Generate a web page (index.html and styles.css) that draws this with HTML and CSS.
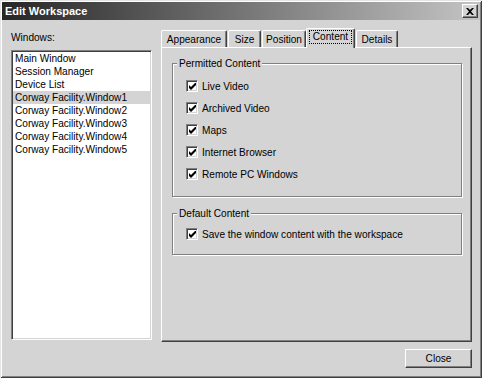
FILE: index.html
```html
<!DOCTYPE html>
<html lang="en">
  <head>
    <meta charset="utf-8"/>
    <title>Edit Workspace</title>
    <link rel="stylesheet" href="styles.css">
  </head>
  <body>
    <div class="dialog">
      <div class="dialog__title">
        <span>Edit Workspace</span>
        <button type="button" class="dialog__close">
          <svg width="8" height="7" viewBox="0 0 8 7"><path d="M0 0h2l2 2 2-2h2L5 3.5 8 7H6L4 5 2 7H0l3-3.5z" fill="#000"/></svg>
        </button>
      </div>

      <div class="dialog__body">
        <div class="windows">
          <div class="windows__label">Windows:</div>
          <ul class="windows__list">
            <li>Main Window</li>
            <li>Session Manager</li>
            <li>Device List</li>
            <li class="is-selected">Corway Facility.Window1</li>
            <li>Corway Facility.Window2</li>
            <li>Corway Facility.Window3</li>
            <li>Corway Facility.Window4</li>
            <li>Corway Facility.Window5</li>
          </ul>
        </div>

        <div class="tabs">
          <div class="tabs__strip">
            <span class="tabs__tab tabs__tab--appearance">Appearance</span>
            <span class="tabs__tab tabs__tab--size">Size</span>
            <span class="tabs__tab tabs__tab--position">Position</span>
            <span class="tabs__tab tabs__tab--content is-active"><span class="tabs__focus">Content</span></span>
            <span class="tabs__tab tabs__tab--details">Details</span>
          </div>
          <div class="tabs__panel">
            <fieldset class="group group--permitted">
              <legend>Permitted Content</legend>
              <label class="check"><span class="check__box"><svg width="7" height="7" viewBox="0 0 7 7"><path d="M0 2v3l2 2 5-5V-1L2 4z" fill="#000"/></svg></span>Live Video</label>
              <label class="check"><span class="check__box"><svg width="7" height="7" viewBox="0 0 7 7"><path d="M0 2v3l2 2 5-5V-1L2 4z" fill="#000"/></svg></span>Archived Video</label>
              <label class="check"><span class="check__box"><svg width="7" height="7" viewBox="0 0 7 7"><path d="M0 2v3l2 2 5-5V-1L2 4z" fill="#000"/></svg></span>Maps</label>
              <label class="check"><span class="check__box"><svg width="7" height="7" viewBox="0 0 7 7"><path d="M0 2v3l2 2 5-5V-1L2 4z" fill="#000"/></svg></span>Internet Browser</label>
              <label class="check"><span class="check__box"><svg width="7" height="7" viewBox="0 0 7 7"><path d="M0 2v3l2 2 5-5V-1L2 4z" fill="#000"/></svg></span>Remote PC Windows</label>
            </fieldset>

            <fieldset class="group group--default">
              <legend>Default Content</legend>
              <label class="check"><span class="check__box"><svg width="7" height="7" viewBox="0 0 7 7"><path d="M0 2v3l2 2 5-5V-1L2 4z" fill="#000"/></svg></span>Save the window content with the workspace</label>
            </fieldset>
          </div>
        </div>
      </div>

      <div class="dialog__footer">
        <button type="button" class="button">Close</button>
      </div>
    </div>
  </body>
</html>
```

FILE: styles.css
```css
body {
  margin: 0;
  background: #d4d4d4;
  font-family: 'Liberation Sans', Arial, sans-serif;
  font-size: 10.1px;
  color: #000;
}

.dialog {
  box-sizing: border-box;
  width: 482px;
  height: 378px;
  background: #d4d4d4;
  box-shadow: inset 1px 1px 0 #e4e4e4, inset -1px -1px 0 #404040,
              inset 2px 2px 0 #fff, inset -2px -2px 0 #808080;
}

.dialog__title {
  display: flex;
  align-items: center;
  justify-content: space-between;
  height: 18px;
  margin: 0 2px;
  padding: 0 2px 0 3px;
  position: relative;
  top: 2px;

  background: linear-gradient(to right, #262626, #c4c4c4);
  color: #fff;
  font-weight: bold;
  font-size: 11px;
}

.dialog__close {
  display: flex;
  align-items: center;
  justify-content: center;
  width: 16px;
  height: 14px;
  padding: 0;
  background: #d4d4d4;
  border: 1px solid;
  border-color: #fff #404040 #404040 #fff;
  box-shadow: inset -1px -1px 0 #808080;
}

.dialog__body {
  display: flex;
  gap: 9px;
  padding: 8px 10px 0 11px;
  margin-top: 2px;
}

.windows {
  width: 141px;
}

.windows__label {
  margin-top: 3px;
  line-height: 13px;
}

.windows__list {
  box-sizing: border-box;
  height: 290px;
  margin: 6px 0 0;
  padding: 1px 0 0;
  list-style: none;

  background: #fff;
  border: 1px solid;
  border-color: #808080 #fff #fff #808080;
  box-shadow: inset 1px 1px 0 #404040, inset -1px -1px 0 #d4d4d4;
}

.windows__list li {
  margin: 0 1px;
  padding-left: 2px;
  line-height: 13px;
  white-space: nowrap;
}

.windows__list li.is-selected {
  background: #d4d4d4;
}

.tabs {
  width: 311px;
}

.tabs__strip {
  display: flex;
  align-items: flex-end;
  height: 19px;
}

.tabs__tab {
  box-sizing: border-box;
  height: 17px;
  margin-right: 1px;
  padding-top: 2px;
  line-height: 13px;
  text-align: center;

  border-top: 1px solid #fff;
  border-left: 1px solid #fff;
  border-right: 1px solid #404040;
  border-radius: 2px 2px 0 0;
  box-shadow: inset -1px 0 0 #808080;
}

.tabs__tab--appearance { width: 66px; }
.tabs__tab--size { width: 33px; }
.tabs__tab--position { width: 44px; margin-right: 0; }
.tabs__tab--content { width: 49px; }
.tabs__tab--details { width: 42px; }

.tabs__tab.is-active {
  position: relative;
  z-index: 1;
  height: 20px;
  margin-bottom: -1px;
  padding-top: 1px;
  background: #d4d4d4;
}

.tabs__focus {
  padding: 0 3px 1px;
  outline: 1px dotted #000;
}

.tabs__panel {
  box-sizing: border-box;
  height: 295px;
  padding: 9px 10px 0 10px;

  border: 1px solid;
  border-color: #fff #404040 #404040 #fff;
  box-shadow: inset -1px -1px 0 #808080;
}

.group {
  box-sizing: border-box;
  width: 290px;
  min-width: 0;
  margin: 0;
  padding: 5px 0 11px 13px;

  border: 1px solid #808080;
  box-shadow: inset 1px 1px 0 #fff, 1px 1px 0 #fff;
}

.group legend {
  margin-left: -9px;
  padding: 0 2px;
  line-height: 13px;
  background: #d4d4d4;
}

.group--default {
  margin-top: 10px;
  padding-top: 3px;
  padding-bottom: 9px;
}

.check {
  display: flex;
  align-items: center;
  gap: 4px;
  height: 22px;
}

.check__box {
  box-sizing: border-box;
  display: flex;
  align-items: center;
  justify-content: center;
  width: 12px;
  height: 12px;

  background: #fff;
  border: 1px solid;
  border-color: #808080 #fff #fff #808080;
  box-shadow: inset 1px 1px 0 #404040, inset -1px -1px 0 #d4d4d4;
}

.dialog__footer {
  display: flex;
  justify-content: flex-end;
  padding: 7px 10px 0;
}

.button {
  box-sizing: border-box;
  width: 67px;
  height: 19px;
  padding: 0;

  background: #d4d4d4;
  border: 1px solid;
  border-color: #fff #404040 #404040 #fff;
  box-shadow: inset -1px -1px 0 #808080;

  font-family: inherit;
  font-size: 10.1px;
  color: #000;
}
```
